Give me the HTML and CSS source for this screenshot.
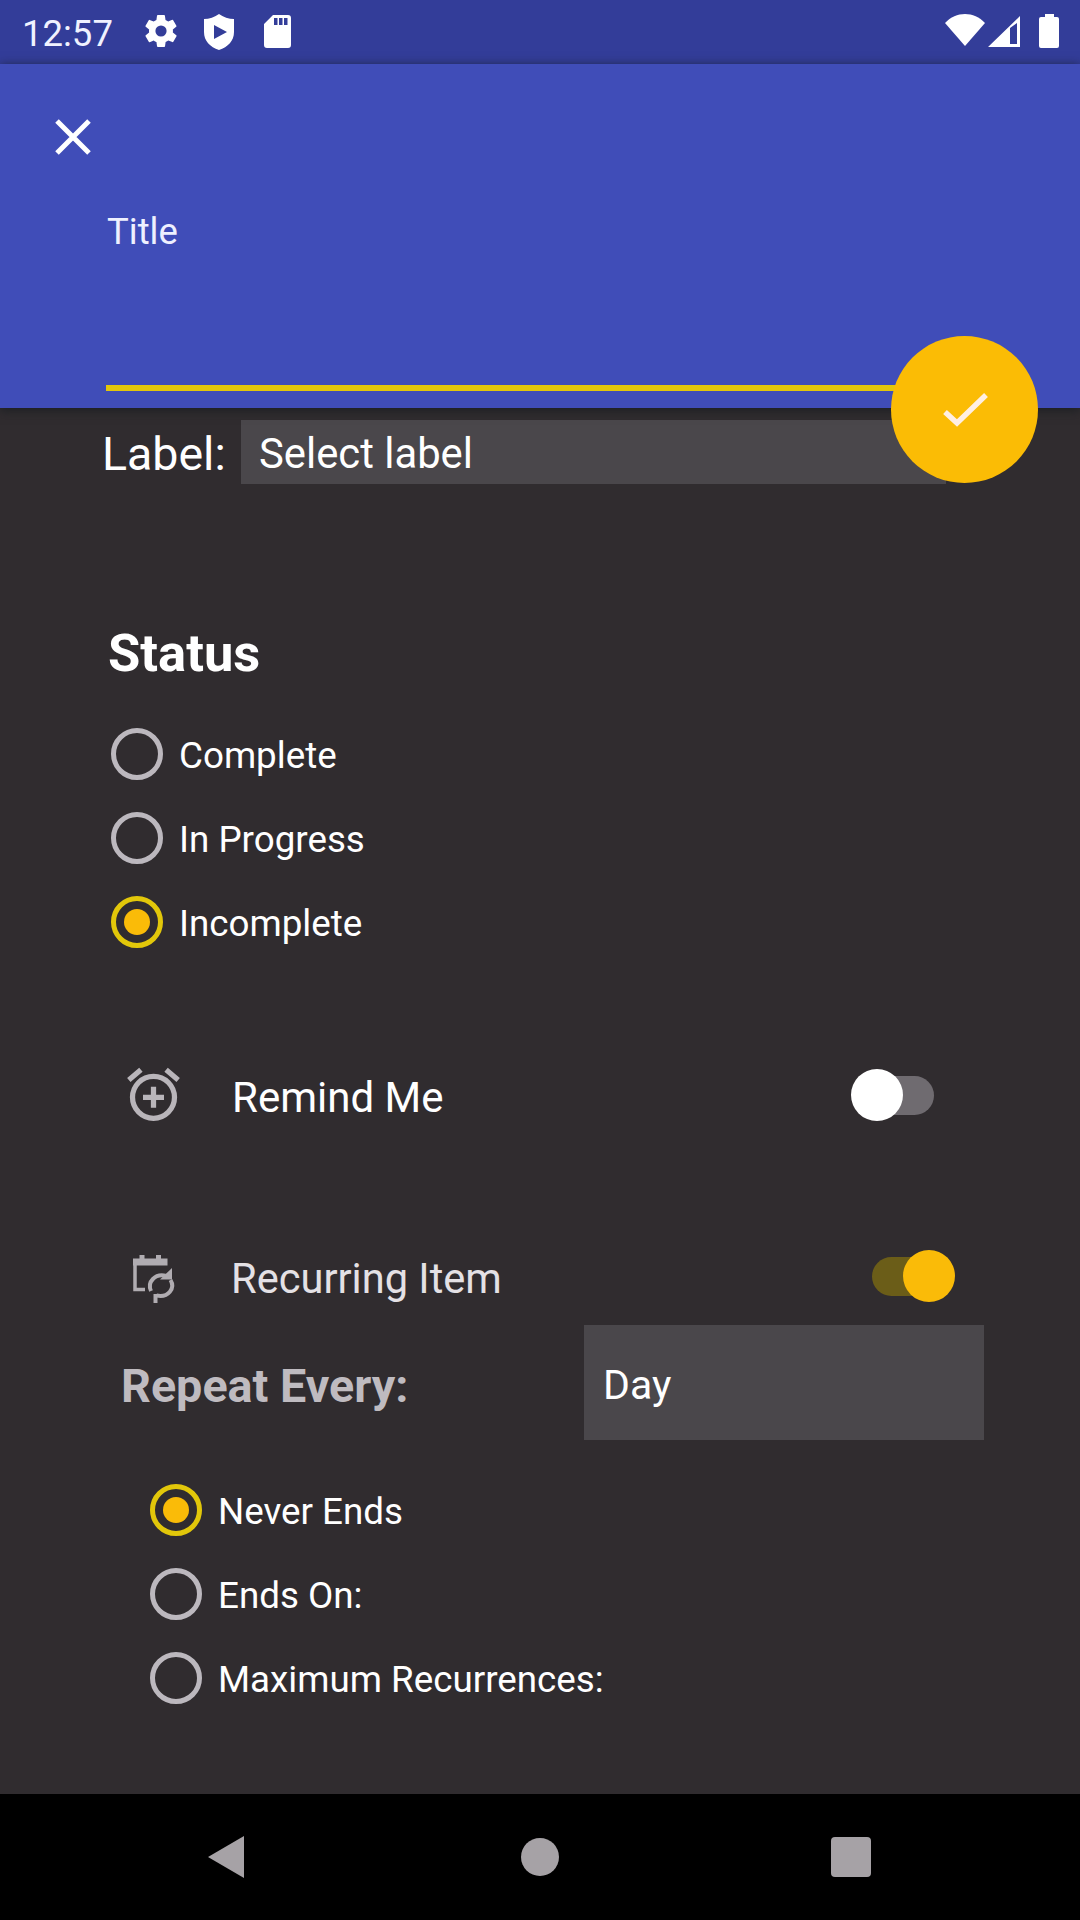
FILE: index.html
```html
<!DOCTYPE html>
<html lang="en">
<head>
<meta charset="utf-8">
<title>New item</title>
<link rel="stylesheet" href="styles.css">
</head>
<body>
<div class="screen">
  <div class="statusbar">
    <span class="clock">12:57</span>
    <div class="status-left">
      <svg class="ic-gear" viewBox="2 2 20 20"><path fill="#fff" fill-rule="evenodd" d="M19.4 13a7.500 7.500 0 0 0 0-2l2.100-1.650a.5.500 0 0 0 .12-.64l-2-3.460a.5.500 0 0 0-.6-.22l-2.500 1a7.300 7.300 0 0 0-1.700-.98l-.38-2.650A.5.500 0 0 0 14 2h-4a.5.500 0 0 0-.5.420l-.37 2.650a7.700 7.700 0 0 0-1.700.98l-2.500-1a.5.500 0 0 0-.6.220l-2 3.460a.5.500 0 0 0 .12.640L4.570 11a7.500 7.500 0 0 0 0 2l-2.100 1.650a.5.500 0 0 0-.12.640l2 3.460a.5.500 0 0 0 .6.220l2.500-1a7.300 7.300 0 0 0 1.700.98l.37 2.650c.04.240.250.400.500.400h4a.5.500 0 0 0 .5-.42l.37-2.650a7.700 7.700 0 0 0 1.700-.98l2.500 1a.5.500 0 0 0 .6-.22l2-3.460a.5.500 0 0 0-.12-.64zM12 15.500a3.500 3.500 0 1 1 0-7 3.500 3.500 0 0 1 0 7z"/></svg>
      <svg class="ic-shield" viewBox="0 0 32 36"><path fill="#fff" fill-rule="evenodd" d="M16 0C12 3 6 5 1 5v13c0 9 6 15 15 18 9-3 15-9 15-18V5C26 5 20 3 16 0zM11 11l13 7-13 7z"/></svg>
      <svg class="ic-sd" viewBox="0 0 27 33"><path fill="#fff" fill-rule="evenodd" d="M9 0h15a3 3 0 0 1 3 3v27a3 3 0 0 1-3 3H3a3 3 0 0 1-3-3V9zM10 3v7h3.500V3zM15 3v7h3.500V3zM20 3v7h3.500V3z"/></svg>
    </div>
    <div class="status-right">
      <svg class="ic-wifi" viewBox="0 0 40 32"><path fill="#fff" d="M0 9C11-3 29-3 40 9L20 32z"/></svg>
      <svg class="ic-signal" viewBox="0 0 32 31"><path fill="#fff" fill-rule="evenodd" d="M32 0v31H0zM22 12v16h7V7z"/></svg>
      <svg class="ic-battery" viewBox="0 0 20 34"><path fill="#fff" d="M6 0h9v3h3a2 2 0 0 1 2 2v27a2 2 0 0 1-2 2H2a2 2 0 0 1-2-2V5a2 2 0 0 1 2-2h4z"/></svg>
    </div>
  </div>

  <header class="header">
    <svg class="close" viewBox="0 0 36 36"><path d="M2 2l32 32M34 2L2 34" stroke="#fff" stroke-width="5" fill="none"/></svg>
    <div class="title-label">Title</div>
    <div class="title-line"></div>
    <div class="fab"><svg viewBox="0 0 48 36"><path d="M4 20l12 11L45 3" stroke="#ffefe2" stroke-width="5.500" fill="none"/></svg></div>
  </header>

  <main class="content">
    <div class="label-row">
      <span class="label-name">Label:</span>
      <div class="select label-select">Select label</div>
    </div>

    <h2 class="status-heading">Status</h2>
    <div class="radios">
      <div class="radio"><i class="dot"></i><span>Complete</span></div>
      <div class="radio"><i class="dot"></i><span>In Progress</span></div>
      <div class="radio"><i class="dot on"></i><span>Incomplete</span></div>
    </div>

    <div class="option remind">
      <svg class="option-icon" viewBox="0 0 24 24"><g fill="none" stroke="#b9b5ba" stroke-width="2"><circle cx="12" cy="12.700" r="8"/><path d="M2.600 6.100l4.600-3.900M21.400 6.100l-4.600-3.900M12 8.700v8M8 12.700h8"/></g></svg>
      <span class="option-name">Remind Me</span>
      <div class="switch"></div>
    </div>
    <div class="option recurring">
      <svg class="option-icon" viewBox="0 0 63 63"><g fill="none" stroke="#b0acb1" stroke-width="4"><path d="M23 44.500H13V17" stroke-width="3.500"/><path d="M11 17h34.500" stroke-width="7"/><path d="M20 10v5M36.500 10v5" stroke-width="5"/><path d="M29 46c-4-9 4-18 15.500-15M48.500 35c5 8-2 18-14 15.500"/><path d="M33.500 58v-9" stroke-width="4"/></g><path fill="#b0acb1" d="M50 23v11.500H38z"/></svg>
      <span class="option-name">Recurring Item</span>
      <div class="switch checked"></div>
    </div>

    <div class="repeat-row">
      <span class="repeat-name">Repeat Every:</span>
      <div class="select repeat-select">Day</div>
    </div>
    <div class="radios ends">
      <div class="radio"><i class="dot on"></i><span>Never Ends</span></div>
      <div class="radio"><i class="dot"></i><span>Ends On:</span></div>
      <div class="radio"><i class="dot"></i><span>Maximum Recurrences:</span></div>
    </div>
  </main>

  <nav class="navbar">
    <svg class="nav-back" viewBox="0 0 36 42"><path fill="#a6a2a6" d="M36 0v42L0 21z"/></svg>
    <i class="nav-home"></i>
    <i class="nav-recent"></i>
  </nav>
</div>
</body>
</html>
```
FILE: styles.css
```css
* { box-sizing: border-box; }
body {
  margin: 0;
  font-family: Roboto, "Liberation Sans", sans-serif;
  color: #fff;
  background: #302c2f;
}
svg { display: block; flex: none; }
.screen {
  width: 1080px;
  height: 1920px;
  display: flex;
  flex-direction: column;
  overflow: hidden;
}

/* status bar */
.statusbar {
  height: 64px;
  flex: none;
  display: flex;
  align-items: flex-start;
  padding: 14px 21px 0 22px;
  background: #333d99;
}
.clock { width: 123px; font-size: 36.500px; line-height: 40px; color: #f0f2ff; }
.status-left { display: flex; gap: 26px; flex: 1; }
.status-right { display: flex; }
.ic-gear { width: 32px; height: 34px; }
.ic-shield { width: 32px; height: 36px; }
.ic-sd { width: 27px; height: 33px; margin: 1px 0 0 3px; }
.ic-wifi { width: 40px; height: 32px; }
.ic-signal { width: 32px; height: 31px; margin: 2px 19px 0 3px; }
.ic-battery { width: 20px; height: 34px; }

/* header */
.header {
  position: relative;
  z-index: 1;
  height: 344px;
  flex: none;
  padding: 55px 106px 0 55px;
  background: #404db8;
  box-shadow: 0 2px 10px rgba(20, 26, 30, .8);
}
.close { width: 36px; height: 36px; }
.title-label { margin: 56px 0 0 52px; font-size: 36.500px; line-height: 42px; color: #eef0ff; }
.title-line { height: 6px; margin: 132px 0 0 51px; background: #e3c60c; }
.fab {
  position: absolute;
  left: 891px;
  top: 272px;
  width: 147px;
  height: 147px;
  border-radius: 50%;
  background: #fbbc05;
  display: flex;
  align-items: center;
  justify-content: center;
}
.fab svg { width: 48px; height: 36px; }

/* form */
.content { height: 1386px; flex: none; padding-top: 12px; }
.label-row { display: flex; height: 64px; padding-left: 102px; }
.label-name { width: 139px; font-size: 46.500px; line-height: 68px; }
.select { background: #4a474b; }
.label-select { width: 705px; padding-left: 18px; font-size: 41.800px; line-height: 68px; }
.status-heading { margin: 139px 0 0 108px; font-size: 52.500px; line-height: 60px; font-weight: 700; }
.radios { margin: 29px 0 0 111px; }
.radio { display: flex; align-items: center; height: 84px; gap: 16px; font-size: 36.750px; }
.radio span { line-height: 42px; padding-top: 3px; }
.dot {
  width: 52px;
  height: 52px;
  border: 5px solid #bcb8be;
  border-radius: 50%;
  display: flex;
  align-items: center;
  justify-content: center;
}
.dot.on { border-color: #e2c70a; }
.dot.on::after { content: ""; width: 26px; height: 26px; border-radius: 50%; background: #fabb08; }
.option { display: flex; align-items: center; height: 64px; padding-left: 122px; }
.remind { margin-top: 99px; }
.recurring { margin-top: 117px; }
.option-icon { width: 63px; height: 63px; }
.option-name { width: 620px; padding: 5px 0 0 47px; font-size: 42px; line-height: 48px; }
.recurring .option-name { padding-left: 46px; font-size: 41.600px; color: #e4e1e5; }
.switch { display: flex; align-items: center; width: 130px; height: 52px; padding-left: 46px; }
.switch::before { content: ""; width: 52px; height: 52px; flex: none; border-radius: 50%; background: #fff; z-index: 1; }
.switch::after { content: ""; width: 57px; height: 39px; flex: none; margin-left: -26px; border-radius: 0 20px 20px 0; background: #6f6b70; }
.switch.checked { flex-direction: row-reverse; justify-content: flex-end; padding-left: 67px; }
.switch.checked::before { background: #fabb08; margin-left: -26px; }
.switch.checked::after { margin-left: 0; border-radius: 20px 0 0 20px; background: #6b5d18; }
.repeat-row { display: flex; margin-top: 17px; padding-left: 121px; height: 115px; }
.repeat-name { width: 463px; font-size: 46.700px; line-height: 122px; font-weight: 700; color: #bfbbc0; }
.repeat-select { width: 400px; padding-left: 19px; font-size: 41px; line-height: 121px; }
.ends { margin: 28px 0 0 150px; }

/* navigation bar */
.navbar {
  flex: 1;
  display: flex;
  align-items: center;
  padding-left: 208px;
  background: #000;
}
.nav-back { width: 36px; height: 42px; }
.nav-home { width: 38px; height: 38px; margin-left: 277px; border-radius: 50%; background: #a6a2a6; }
.nav-recent { width: 40px; height: 40px; margin-left: 272px; border-radius: 4px; background: #a6a2a6; }
```
